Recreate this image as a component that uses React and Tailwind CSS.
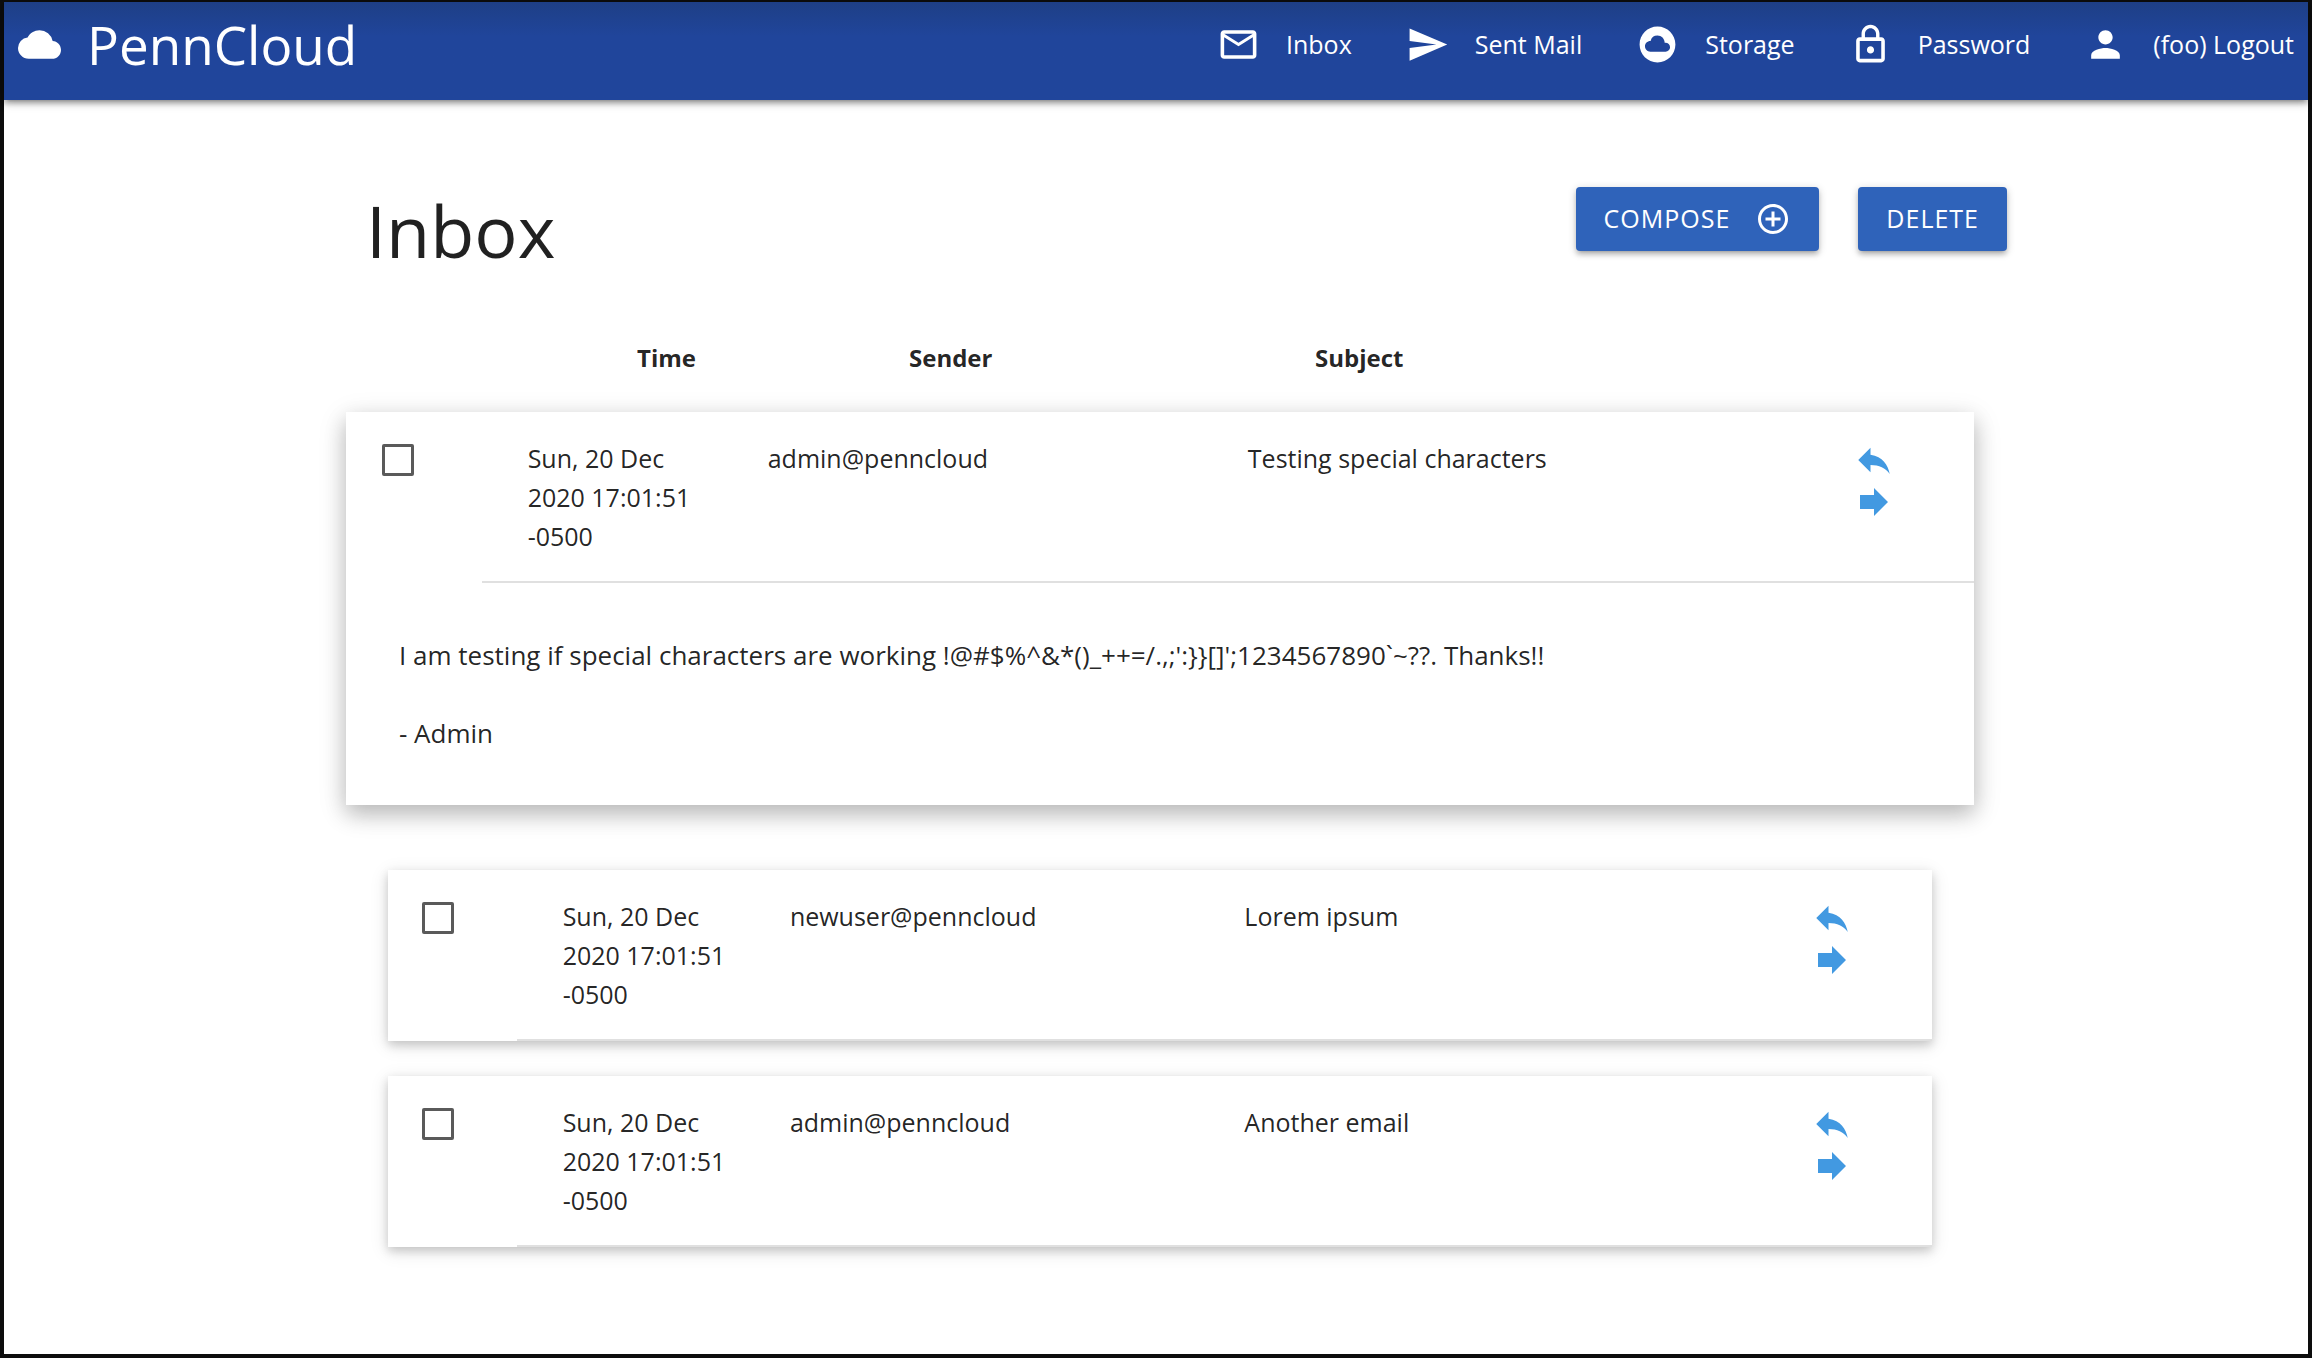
import {
  MdAddCircleOutline,
  MdCloud,
  MdCloudCircle,
  MdForward,
  MdLockOutline,
  MdMailOutline,
  MdPerson,
  MdReply,
  MdSend,
} from "react-icons/md";

const NAV = [
  { label: "Inbox", Icon: MdMailOutline },
  { label: "Sent Mail", Icon: MdSend },
  { label: "Storage", Icon: MdCloudCircle },
  { label: "Password", Icon: MdLockOutline },
  { label: "(foo) Logout", Icon: MdPerson },
];

const EMAILS = [
  {
    id: 1,
    time: "Sun, 20 Dec 2020 17:01:51 -0500",
    sender: "admin@penncloud",
    subject: "Testing special characters",
    open: true,
    body: [
      "I am testing if special characters are working !@#$%^&*()_++=/.,;':}}[]';1234567890`~??. Thanks!!",
      "- Admin",
    ],
  },
  {
    id: 2,
    time: "Sun, 20 Dec 2020 17:01:51 -0500",
    sender: "newuser@penncloud",
    subject: "Lorem ipsum",
  },
  {
    id: 3,
    time: "Sun, 20 Dec 2020 17:01:51 -0500",
    sender: "admin@penncloud",
    subject: "Another email",
  },
];

function Header() {
  return (
    <header className="flex h-[98px] items-start justify-between bg-[#20459b] bg-linear-to-b from-[#1e3f86] to-[#20459b] to-35% px-[14px] text-white shadow-[0_4px_4px_0_rgba(0,0,0,0.14),0_5px_2px_-4px_rgba(0,0,0,0.12),0_2px_9px_0_rgba(0,0,0,0.35)]">
      <a href="#home" className="flex h-[85px] items-center gap-[26px]">
        <MdCloud className="size-[43px]" />
        <span className="text-[53px] leading-[85px]">PennCloud</span>
      </a>
      <nav className="flex h-[85px] items-center gap-[54px]">
        {NAV.map(({ label, Icon }) => (
          <a key={label} href="#nav" className="flex items-center gap-[26px]">
            <Icon className="size-[43px]" />
            <span>{label}</span>
          </a>
        ))}
      </nav>
    </header>
  );
}

const buttonClass =
  "flex h-16 cursor-pointer items-center gap-[25px] rounded-[4px] bg-[#2f63ba] px-7 text-[25px] tracking-[1px] text-white uppercase shadow-[0_4px_4px_0_rgba(0,0,0,0.14),0_5px_2px_-4px_rgba(0,0,0,0.12),0_2px_9px_0_rgba(0,0,0,0.2)]";

function EmailCard({ email }) {
  const shape = email.open
    ? "mb-[65px] shadow-[0_9px_20px_0_rgba(0,0,0,0.18),0_7px_27px_0_rgba(0,0,0,0.15)]"
    : "mx-[42px] mb-[35px] shadow-[0_4px_9px_0_rgba(0,0,0,0.16),0_4px_18px_0_rgba(0,0,0,0.12)]";
  const boxPad = email.open ? "pl-9" : "pl-[34px]";
  return (
    <li className={`bg-white ${shape}`}>
      <div className="grid grid-cols-12">
        <div className={`pt-8 ${boxPad}`}>
          <input
            type="checkbox"
            aria-label={`Select ${email.subject}`}
            className="block size-8 cursor-pointer appearance-none rounded-[2px] border-[3px] border-[#5a5a5a] checked:bg-[#5a5a5a]"
          />
        </div>
        <div className="col-span-11 grid grid-cols-12 border-b-2 border-[#e0e0e0] px-[26px] pt-[27px] pb-[25px] leading-[39px]">
          <span className="col-span-2 px-5">{email.time}</span>
          <span className="col-span-4 px-5">{email.sender}</span>
          <span className="col-span-5 px-5">{email.subject}</span>
          <span className="flex flex-col items-end pr-[53px] text-[#4299e1]">
            <button type="button" aria-label="Reply" className="cursor-pointer">
              <MdReply className="size-[42px]" />
            </button>
            <button type="button" aria-label="Forward" className="cursor-pointer">
              <MdForward className="size-[42px]" />
            </button>
          </span>
        </div>
      </div>
      {email.open && (
        <div className="flex flex-col gap-[39px] px-[53px] pt-[53px] pb-[52px] text-[26px] leading-[39px]">
          {email.body.map((line) => (
            <p key={line}>{line}</p>
          ))}
        </div>
      )}
    </li>
  );
}

export default function App() {
  return (
    <div className="min-h-screen border-4 border-t-2 border-[#0d0d0d] bg-white font-['Open_Sans',sans-serif] text-[25px] text-black/87">
      <Header />
      <main className="pr-[334px] pl-[342px]">
        <div className="-mr-[33px] flex items-start justify-between pt-[87px] pl-[20px]">
          <h1 className="text-[72px] leading-[86px]">Inbox</h1>
          <div className="flex gap-[39px]">
            <button type="button" className={buttonClass}>
              Compose
              <MdAddCircleOutline className="size-9" />
            </button>
            <button type="button" className={buttonClass}>
              Delete
            </button>
          </div>
        </div>
        <div className="mt-[65px] grid grid-cols-[291fr_272fr_406fr_659fr] text-2xl leading-[39px] font-bold">
          <span className="col-start-2">Time</span>
          <span>Sender</span>
          <span>Subject</span>
        </div>
        <ul className="mt-[35px]">
          {EMAILS.map((email) => (
            <EmailCard key={email.id} email={email} />
          ))}
        </ul>
      </main>
    </div>
  );
}
